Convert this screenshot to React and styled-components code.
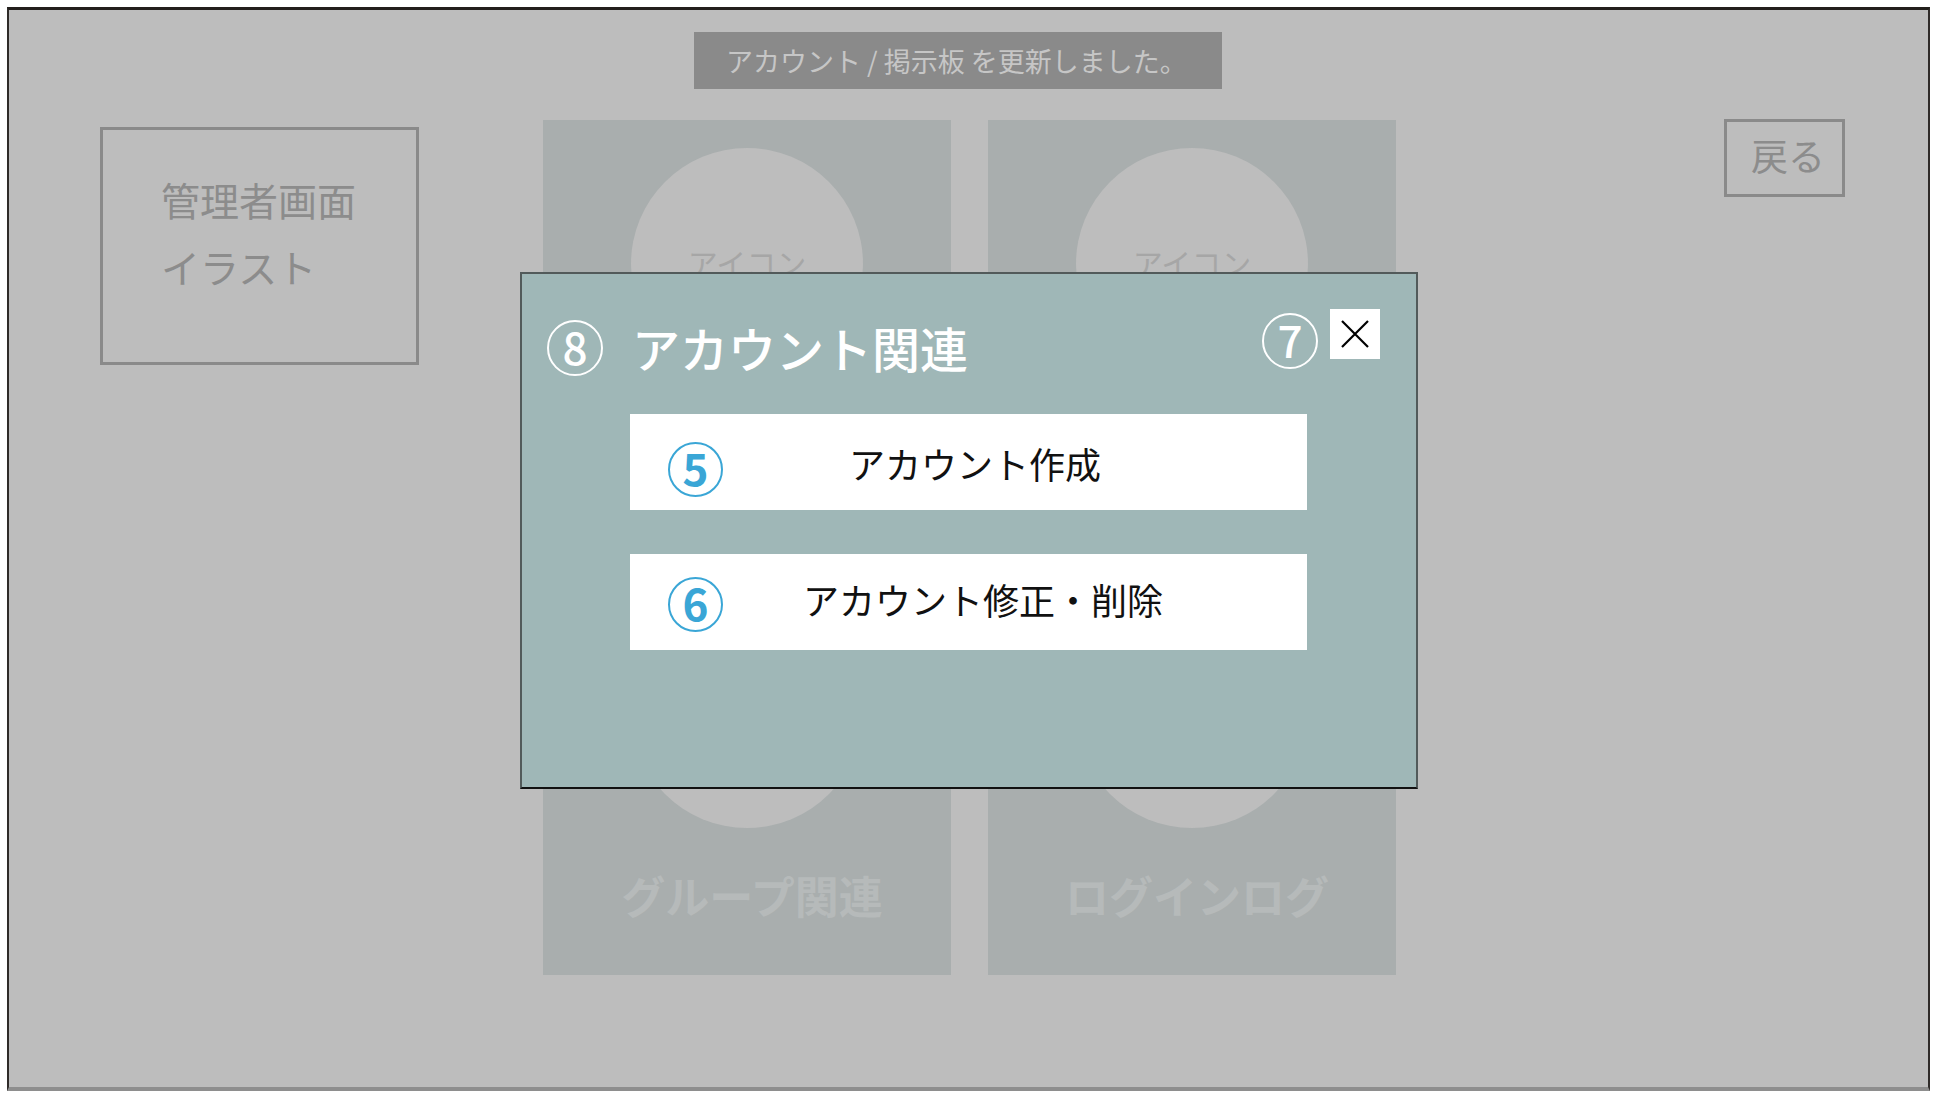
import React from "react";
import styled, { createGlobalStyle } from "styled-components";

const Global = createGlobalStyle`
  html, body { margin: 0; padding: 0; background: #ffffff; }
  body { font-family: "Noto Sans CJK JP", "Noto Sans", sans-serif; }
  * { box-sizing: border-box; }
`;

const Frame = styled.div`
  position: relative;
  width: 1923px;
  height: 1084px;
  margin: 7px 0 0 7px;
  background: #bdbdbd;
  border-top: 3px solid #231f1c;
  border-left: 2px solid #2f2b29;
  border-right: 2px solid #2f2b29;
  border-bottom: 4px solid #8e8e8e;
`;

const Page = styled.div`
  display: flex;
  align-items: flex-start;
  padding: 110px 0 0 91px;
`;

const IllustrationBox = styled.div`
  width: 319px;
  height: 238px;
  margin-top: 7px;
  border: 3px solid #8a8a8a;
  padding: 36px 0 0 58px;
  color: #8c8c8c;
  font-size: 39px;
  line-height: 67px;
`;

const CardGrid = styled.div`
  margin-left: 124px;
  display: grid;
  grid-template-columns: 408px 408px;
  grid-auto-rows: 407px;
  column-gap: 37px;
  row-gap: 41px;
`;

const Card = styled.div`
  background: #a9aeae;
  display: flex;
  flex-direction: column;
  align-items: center;
`;

const IconCircle = styled.div`
  width: 232px;
  height: 232px;
  margin-top: 28px;
  border-radius: 50%;
  background: #bdbdbd;
  display: flex;
  align-items: center;
  justify-content: center;
  color: #a6a6a6;
  font-size: 30px;
  padding-bottom: 4px;
`;

const CardLabel = styled.div`
  margin-top: 42px;
  padding-left: 10px;
  font-size: 44px;
  line-height: 50px;
  font-weight: 700;
  color: #b6baba;
`;

const BackButton = styled.div`
  margin-left: 328px;
  margin-top: -1px;
  width: 121px;
  height: 78px;
  border: 3px solid #8a8a8a;
  display: flex;
  align-items: center;
  justify-content: center;
  color: #8c8c8c;
  font-size: 37px;
  padding-bottom: 6px;
  padding-left: 7px;
`;

const Toast = styled.div`
  position: absolute;
  left: 685px;
  top: 22px;
  width: 528px;
  height: 57px;
  background: #8a8a8a;
  color: #c6c6c6;
  font-size: 27px;
  display: flex;
  align-items: center;
  padding-left: 32px;
  white-space: pre;
`;

const Modal = styled.div`
  position: absolute;
  left: 511px;
  top: 262px;
  width: 898px;
  height: 517px;
  background: #9fb7b7;
  border: 2px solid #525a5a;
  border-bottom-color: #111111;
`;

const Header = styled.div`
  display: flex;
  align-items: flex-start;
  padding: 35px 36px 0 25px;
`;

const Badge = styled.div`
  width: ${(p) => p.size || 56}px;
  height: ${(p) => p.size || 56}px;
  flex: none;
  border-radius: 50%;
  border: 2.5px solid ${(p) => p.color};
  color: ${(p) => p.color};
  display: flex;
  align-items: center;
  justify-content: center;
  font-size: 44px;
  font-weight: ${(p) => p.weight || 500};
  line-height: 1;
  margin-top: ${(p) => p.top || 0}px;
  margin-left: ${(p) => (p.auto ? "auto" : `${p.left || 0}px`)};
  padding-bottom: 5px;
`;

const Title = styled.div`
  margin-left: 29px;
  margin-top: 10px;
  font-size: 48px;
  line-height: 56px;
  font-weight: 500;
  color: #ffffff;
`;

const CloseBox = styled.div`
  width: 50px;
  height: 50px;
  margin-left: 12px;
  background: #ffffff;
  display: flex;
  align-items: center;
  justify-content: center;
`;

const Menu = styled.div`
  margin-top: 38px;
  padding-left: 108px;
  display: flex;
  flex-direction: column;
  gap: 44px;
`;

const MenuButton = styled.div`
  width: 677px;
  height: 96px;
  background: #ffffff;
  display: flex;
  align-items: center;
`;

const MenuLabel = styled.div`
  flex: 1;
  margin-left: 12px;
  text-align: center;
  padding-right: ${(p) => p.padRight}px;
  font-size: 36px;
  line-height: 44px;
  color: #111111;
  margin-top: ${(p) => p.top || 0}px;
`;

const CloseIcon = () => (
  <svg width="30" height="30" viewBox="0 0 30 30">
    <path d="M2 2 L28 28 M28 2 L2 28" stroke="#000" strokeWidth="2.2" fill="none" />
  </svg>
);

const cards = [
  { label: "アカウント関連" },
  { label: "掲示板関連" },
  { label: "グループ関連" },
  { label: "ログインログ" },
];

const items = [
  { n: "5", label: "アカウント作成", circleTop: 15, textTop: 2, padRight: 92 },
  { n: "6", label: "アカウント修正・削除", circleTop: 4, textTop: -6, padRight: 76 },
];

export default function App() {
  return (
    <>
      <Global />
      <Frame>
        <Page>
          <IllustrationBox>
            <div>管理者画面</div>
            <div>イラスト</div>
          </IllustrationBox>
          <CardGrid>
            {cards.map((c) => (
              <Card key={c.label}>
                <IconCircle>アイコン</IconCircle>
                <CardLabel>{c.label}</CardLabel>
              </Card>
            ))}
          </CardGrid>
          <BackButton>戻る</BackButton>
        </Page>
        <Toast>アカウント / 掲示板 を更新しました。</Toast>
        <Modal>
          <Header>
            <Badge color="#ffffff" top={11}>8</Badge>
            <Title>アカウント関連</Title>
            <Badge color="#ffffff" top={4} auto>7</Badge>
            <CloseBox>
              <CloseIcon />
            </CloseBox>
          </Header>
          <Menu>
            {items.map((it) => (
              <MenuButton key={it.n}>
                <Badge color="#3aa6d6" left={38} top={it.circleTop} size={55} weight={700}>
                  {it.n}
                </Badge>
                <MenuLabel top={it.textTop} padRight={it.padRight}>
                  {it.label}
                </MenuLabel>
              </MenuButton>
            ))}
          </Menu>
        </Modal>
      </Frame>
    </>
  );
}
